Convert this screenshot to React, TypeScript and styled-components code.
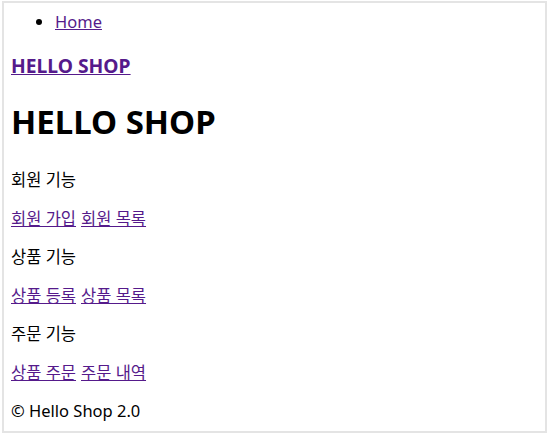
import React from "react";
import styled, { createGlobalStyle } from "styled-components";

const Global = createGlobalStyle`
  html, body { margin: 0; padding: 0; background: #ffffff; }
  body { font-family: "Noto Sans", "Noto Sans CJK KR", sans-serif; font-size: 16.5px; line-height: 22px; color: #000; }
`;

const Frame = styled.div`
  box-sizing: border-box;
  margin: 1px 2px 0 2px;
  width: 545px;
  height: 432px;
  border: 2px solid #e4e4e4;
  padding: 8px 7px 0 7px;
  overflow: hidden;
`;

const NavList = styled.ul`
  margin: 0;
  padding: 0 0 0 44px;
`;

const Link = styled.a`
  color: #551a8b;
  text-decoration: underline;
`;

const Brand = styled.h3`
  margin: 20px 0 0 0;
  font-size: 19.3px;
  line-height: 26px;
  font-weight: 700;
`;

const Title = styled.h1`
  margin: 21px 0 25px 0;
  font-size: 33px;
  line-height: 44px;
  font-weight: 700;
`;

const Section = styled.p`
  margin: 16.5px 0;
`;

const LinkRow = styled.p`
  margin: 16.5px 0;
  display: flex;
  gap: 5px;
`;

const Footer = styled.p`
  margin: 16.5px 0 0 0;
`;

const groups = [
  { title: "회원 기능", links: ["회원 가입", "회원 목록"] },
  { title: "상품 기능", links: ["상품 등록", "상품 목록"] },
  { title: "주문 기능", links: ["상품 주문", "주문 내역"] },
];

export default function App() {
  return (
    <>
      <Global />
      <Frame>
        <NavList>
          <li>
            <Link href="#">Home</Link>
          </li>
        </NavList>
        <Brand>
          <Link href="#">HELLO SHOP</Link>
        </Brand>
        <Title>HELLO SHOP</Title>
        {groups.map((g) => (
          <React.Fragment key={g.title}>
            <Section>{g.title}</Section>
            <LinkRow>
              {g.links.map((l) => (
                <Link key={l} href="#">
                  {l}
                </Link>
              ))}
            </LinkRow>
          </React.Fragment>
        ))}
        <Footer>© Hello Shop 2.0</Footer>
      </Frame>
    </>
  );
}
